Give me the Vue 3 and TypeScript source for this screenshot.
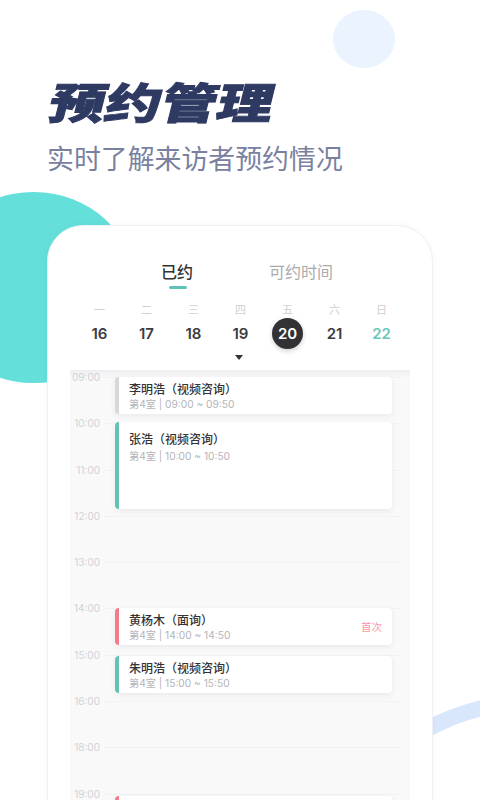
<script setup lang="ts">
interface Day { label: string; date: number; selected?: boolean; sunday?: boolean }
interface Booking { name: string; detail: string; top: number; height: number; tone: string; tag?: string; tall?: boolean }

const days: Day[] = [
  { label: '一', date: 16 },
  { label: '二', date: 17 },
  { label: '三', date: 18 },
  { label: '四', date: 19 },
  { label: '五', date: 20, selected: true },
  { label: '六', date: 21 },
  { label: '日', date: 22, sunday: true },
]
const hours = ['09:00', '10:00', '11:00', '12:00', '13:00', '14:00', '15:00', '16:00', '18:00', '19:00']
const bookings: Booking[] = [
  { name: '李明浩（视频咨询）', detail: '第4室 | 09:00 ~ 09:50', top: 7, height: 37, tone: 'gray' },
  { name: '张浩（视频咨询）', detail: '第4室 | 10:00 ~ 10:50', top: 52, height: 87, tone: 'teal', tall: true },
  { name: '黄杨木（面询）', detail: '第4室 | 14:00 ~ 14:50', top: 238, height: 37, tone: 'pink', tag: '首次' },
  { name: '朱明浩（视频咨询）', detail: '第4室 | 15:00 ~ 15:50', top: 286, height: 37, tone: 'teal' },
  { name: '', detail: '', top: 426, height: 37, tone: 'pink' },
]
</script>

<template>
  <div class="page">
    <div class="blob blob-sky"></div>
    <div class="blob blob-teal"></div>
    <div class="blob blob-ring"></div>

    <header class="hero">
      <h1 class="title">预约管理</h1>
      <p class="subtitle">实时了解来访者预约情况</p>
    </header>

    <section class="card">
      <div class="head">
        <nav class="tabs">
          <span class="tab active">已约</span>
          <span class="tab">可约时间</span>
        </nav>
        <div class="week">
          <div v-for="d in days" :key="d.date" class="day">
            <span class="weekday">{{ d.label }}</span>
            <span class="date" :class="{ selected: d.selected, sunday: d.sunday }">{{ d.date }}</span>
          </div>
        </div>
        <div class="caret-row"><i class="caret"></i></div>
      </div>

      <div class="schedule">
        <div v-for="h in hours" :key="h" class="hour">
          <span class="time">{{ h }}</span>
          <span class="rule"></span>
        </div>
        <article
          v-for="b in bookings"
          :key="b.top"
          class="booking"
          :class="[b.tone, { tall: b.tall }]"
          :style="{ top: b.top + 'px', height: b.height + 'px' }"
        >
          <div class="info">
            <div class="name">{{ b.name }}</div>
            <div class="detail">{{ b.detail }}</div>
          </div>
          <span v-if="b.tag" class="tag">{{ b.tag }}</span>
        </article>
      </div>
    </section>
  </div>
</template>

<style>
html, body { margin: 0; background: #fff; }
</style>

<style scoped>
.page {
  position: relative;
  width: 480px;
  height: 800px;
  overflow: hidden;
  background: #fff;
  font-family: "Noto Sans CJK SC", "Noto Sans", sans-serif;
  display: flex;
  flex-direction: column;
}
.blob { position: absolute; border-radius: 50%; }
.blob-sky { left: 333px; top: 10px; width: 62px; height: 58px; background: #eaf3fe; }
.blob-teal { left: -69px; top: 192px; width: 205px; height: 191px; background: #64dfda; }
.blob-ring {
  left: 290px; top: 693px; width: 500px; height: 500px;
  box-sizing: border-box;
  border: 16px solid #d9e7fd;
}
.hero { position: relative; padding: 62px 0 0 47px; height: 225px; box-sizing: border-box; flex: none; }
.title {
  margin: 0 0 0 -2px;
  height: 62px;
  font-size: 56px;
  line-height: 62px;
  font-weight: 900;
  letter-spacing: 0;
  color: #2f3a63;
  -webkit-text-stroke: 1.2px #2f3a63;
  white-space: nowrap;
  transform: skewX(-14deg) scaleY(0.76);
  transform-origin: left bottom;
}
.subtitle {
  margin: 16px 0 0;
  font-size: 26.9px;
  line-height: 36px;
  color: #7a819f;
  font-weight: 400;
  white-space: nowrap;
}
.card {
  position: relative;
  margin-left: 47px;
  width: 386px;
  height: 600px;
  box-sizing: border-box;
  background: #fff;
  border: 1px solid #eef0f5;
  border-radius: 36px 36px 0 0;
  box-shadow: 0 0 6px rgba(90, 100, 140, 0.05);
  flex: none;
}
.head { position: relative; z-index: 1; height: 144px; }
.tabs { display: flex; padding: 33px 0 0 113px; gap: 76px; }
.tab {
  position: relative;
  font-size: 16px;
  line-height: 24px;
  color: #ababab;
}
.tab.active { color: #333; font-weight: 500; }
.tab.active::after {
  content: "";
  position: absolute;
  left: 8px;
  bottom: -6px;
  width: 18px;
  height: 3px;
  border-radius: 2px;
  background: #5cc3b6;
}
.week { display: flex; padding: 19px 0 0 28px; }
.day { width: 47px; display: flex; flex-direction: column; align-items: center; }
.weekday { font-size: 11px; line-height: 14px; color: #d0d0d0; }
.date {
  margin-top: 2px;
  width: 31px;
  height: 31px;
  border-radius: 50%;
  display: flex;
  align-items: center;
  justify-content: center;
  font-family: Inter, "Noto Sans", sans-serif;
  font-size: 15px;
  font-weight: 600;
  color: #3c3c40;
}
.date.selected { background: #323236; color: #fff; box-shadow: 0 2px 5px rgba(0, 0, 0, 0.18); }
.date.sunday { color: #6cc6ba; }
.caret-row { display: flex; justify-content: center; padding-top: 6px; height: 6px; margin-left: -2px; }
.caret {
  width: 0; height: 0;
  border-left: 4.5px solid transparent;
  border-right: 4.5px solid transparent;
  border-top: 5px solid #333;
}
.schedule {
  position: relative;
  margin-left: 22px;
  width: 340px;
  height: 430px;
  background: #f9f9fa;
  overflow: hidden;
}
.schedule::before {
  content: "";
  position: absolute;
  left: 0; right: 0; top: 0;
  height: 8px;
  background: linear-gradient(rgba(60, 60, 90, 0.06), rgba(60, 60, 90, 0));
}
.hour { height: 46.3px; display: flex; align-items: flex-start; }
.time {
  width: 30px;
  text-align: right;
  font-family: Inter, "Noto Sans", sans-serif;
  font-size: 10px;
  line-height: 15px;
  color: #d2d2d6;
}
.rule { margin: 7px 10px 0 4px; flex: 1; height: 1px; background: #f3f3f5; }
.booking {
  position: absolute;
  left: 45px;
  width: 277px;
  box-sizing: border-box;
  padding: 3px 10px 0 10px;
  background: #fff;
  border-left: 4px solid #d8d8d8;
  border-radius: 4px;
  box-shadow: 0 2px 6px rgba(60, 60, 90, 0.08);
  display: flex;
  justify-content: space-between;
}
.booking.tall { padding-top: 8px; }
.booking.tall .detail { margin-top: 2px; }
.booking.teal { border-left-color: #62c3b5; }
.booking.pink { border-left-color: #f47c8a; }
.name { font-size: 12px; line-height: 17px; font-weight: 500; color: #333337; }
.detail {
  font-family: Inter, "Noto Sans CJK SC", sans-serif;
  font-size: 10.2px;
  line-height: 15px;
  color: #b4b4b8;
}
.tag { align-self: center; font-size: 10.5px; color: #f59aa6; margin-top: -3px; }
</style>
